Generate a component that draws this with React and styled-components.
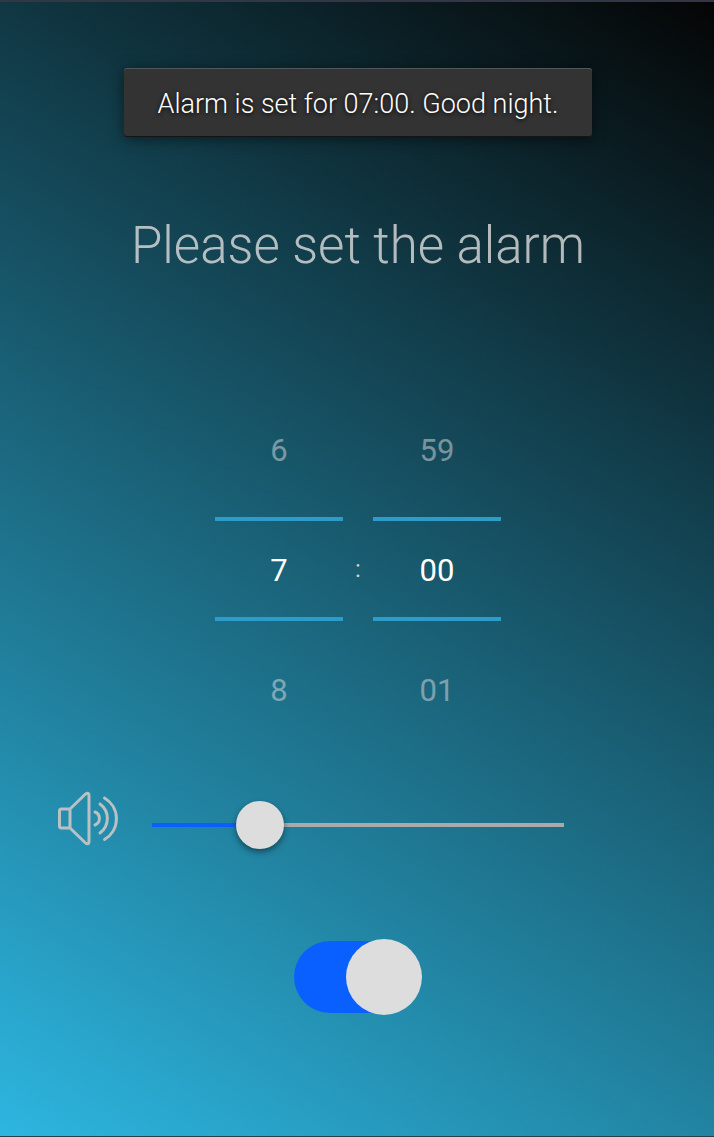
import React, { useState } from "react";
import styled, { createGlobalStyle } from "styled-components";

const GlobalStyle = createGlobalStyle`
  *, *::before, *::after { box-sizing: border-box; }
  html { background: #2d9cc0; }
  body { margin: 0; font-family: Roboto, sans-serif; }
  button, input { font: inherit; color: inherit; }
`;

const Screen = styled.main`
  min-height: 100vh;
  display: flex;
  flex-direction: column;
  align-items: center;
  padding: 66px 0 0 2px;
  border-top: 2px solid #333644;
  border-bottom: 1px solid #303b48;
  background: linear-gradient(32deg, #2db6e0, #050505);
  overflow: hidden;
`;

const Toast = styled.div`
  height: 69px;
  padding: 3px 34px 0;
  display: flex;
  align-items: center;
  border-radius: 3px;
  background: #333;
  color: #fff;
  font-size: 27px;
  font-weight: 300;
  line-height: 32px;
  text-shadow: 0 1px 4px #000;
  box-shadow: 0 2px 14px rgba(0, 0, 0, 0.5), inset 0 1px 0 #505859,
    inset 0 -1px 0 #141414;
`;

const Title = styled.h1`
  margin: 78px 0 0;
  color: rgba(221, 221, 221, 0.8);
  font-size: 51px;
  font-weight: 300;
  line-height: 62px;
  text-align: center;
`;

const TimePicker = styled.div`
  display: flex;
  align-items: center;
  justify-content: center;
  margin-top: 144px;
`;

const Wheel = styled.div`
  width: 128px;
  display: flex;
  flex-direction: column;
  font-size: 31px;
  line-height: 36px;
`;

const Step = styled.button`
  height: 60px;
  padding: 0;
  border: 0;
  background: none;
  color: #ddd;
  opacity: 0.5;
  cursor: pointer;
`;

const Current = styled.input`
  width: 100%;
  height: 104px;
  margin: 36px 0 40px;
  padding: 2px 0 0;
  border: solid #2d9cc8;
  border-width: 4px 0;
  border-radius: 0;
  background: none;
  color: #fff;
  text-align: center;
  outline: none;
`;

const Colon = styled.span`
  width: 30px;
  padding-bottom: 4px;
  color: #ccd4d8;
  font-size: 24px;
  line-height: 28px;
  text-align: center;
`;

const VolumeRow = styled.label`
  align-self: stretch;
  display: flex;
  align-items: center;
  gap: 32px;
  margin-top: 68px;
  padding: 0 150px 0 54px;
`;

const SpeakerIcon = styled.svg`
  flex: none;
  width: 64px;
  height: 60px;
  fill: none;
  stroke: #b9c1c4;
  stroke-width: 3;
  stroke-linecap: round;
  stroke-linejoin: round;
`;

const Slider = styled.input`
  flex: 1;
  min-width: 0;
  height: 48px;
  margin: 12px 0 0;
  appearance: none;
  background: linear-gradient(#0a60ff, #0a60ff) left center / ${(p) => p.$fill}% 4px no-repeat,
    linear-gradient(#aaa, #aaa) center / 100% 4px no-repeat;
  outline: none;

  &::-webkit-slider-thumb {
    appearance: none;
    width: 48px;
    height: 48px;
    border-radius: 50%;
    background: #ddd;
    box-shadow: 0 3px 6px rgba(0, 0, 0, 0.45);
  }
`;

const Switch = styled.input`
  appearance: none;
  position: relative;
  display: flex;
  align-items: center;
  width: 128px;
  height: 76px;
  margin: 90px 0 60px;
  cursor: pointer;

  &::before {
    content: "";
    width: 128px;
    height: 72px;
    border-radius: 36px;
    background: ${(p) => (p.checked ? "#0a60ff" : "#777")};
  }

  &::after {
    content: "";
    position: absolute;
    top: 0;
    left: ${(p) => (p.checked ? "52px" : "0")};
    width: 76px;
    height: 76px;
    border-radius: 50%;
    background: #ddd;
  }
`;

const pad = (n) => String(n).padStart(2, "0");

function NumberWheel({ label, value, count, format, onChange }) {
  const previous = (value + count - 1) % count;
  const next = (value + 1) % count;
  return (
    <Wheel>
      <Step type="button" onClick={() => onChange(previous)}>{format(previous)}</Step>
      <Current
        aria-label={label}
        inputMode="numeric"
        value={format(value)}
        onChange={(e) => onChange((Number(e.target.value) || 0) % count)}
      />
      <Step type="button" onClick={() => onChange(next)}>{format(next)}</Step>
    </Wheel>
  );
}

export default function App() {
  const [hour, setHour] = useState(7);
  const [minute, setMinute] = useState(0);
  const [volume, setVolume] = useState(23);
  const [enabled, setEnabled] = useState(true);

  return (
    <>
      <GlobalStyle />
      <Screen>
        <Toast role="status">Alarm is set for {pad(hour)}:{pad(minute)}. Good night.</Toast>
        <Title>Please set the alarm</Title>
        <TimePicker>
          <NumberWheel label="Hour" value={hour} count={24} format={String} onChange={setHour} />
          <Colon>:</Colon>
          <NumberWheel label="Minute" value={minute} count={60} format={pad} onChange={setMinute} />
        </TimePicker>
        <VolumeRow>
          <SpeakerIcon viewBox="0 0 64 60" role="img" aria-label="Volume">
            <path d="M14 20H5.5Q3.500 20 3.500 22V37Q3.500 39 5.500 39H14L29.500 54Q33 56 33 52.500V6.500Q33 3 29.500 5L14 20V39" />
            <path d="M39 23A7 7 0 0 1 39 36M44 15A18 18 0 0 1 44 44M48.500 9A24 24 0 0 1 48.500 50.500" />
          </SpeakerIcon>
          <Slider
            type="range"
            min="0"
            max="100"
            value={volume}
            $fill={volume}
            onChange={(e) => setVolume(Number(e.target.value))}
          />
        </VolumeRow>
        <Switch
          type="checkbox"
          role="switch"
          aria-label="Alarm on"
          checked={enabled}
          onChange={(e) => setEnabled(e.target.checked)}
        />
      </Screen>
    </>
  );
}
